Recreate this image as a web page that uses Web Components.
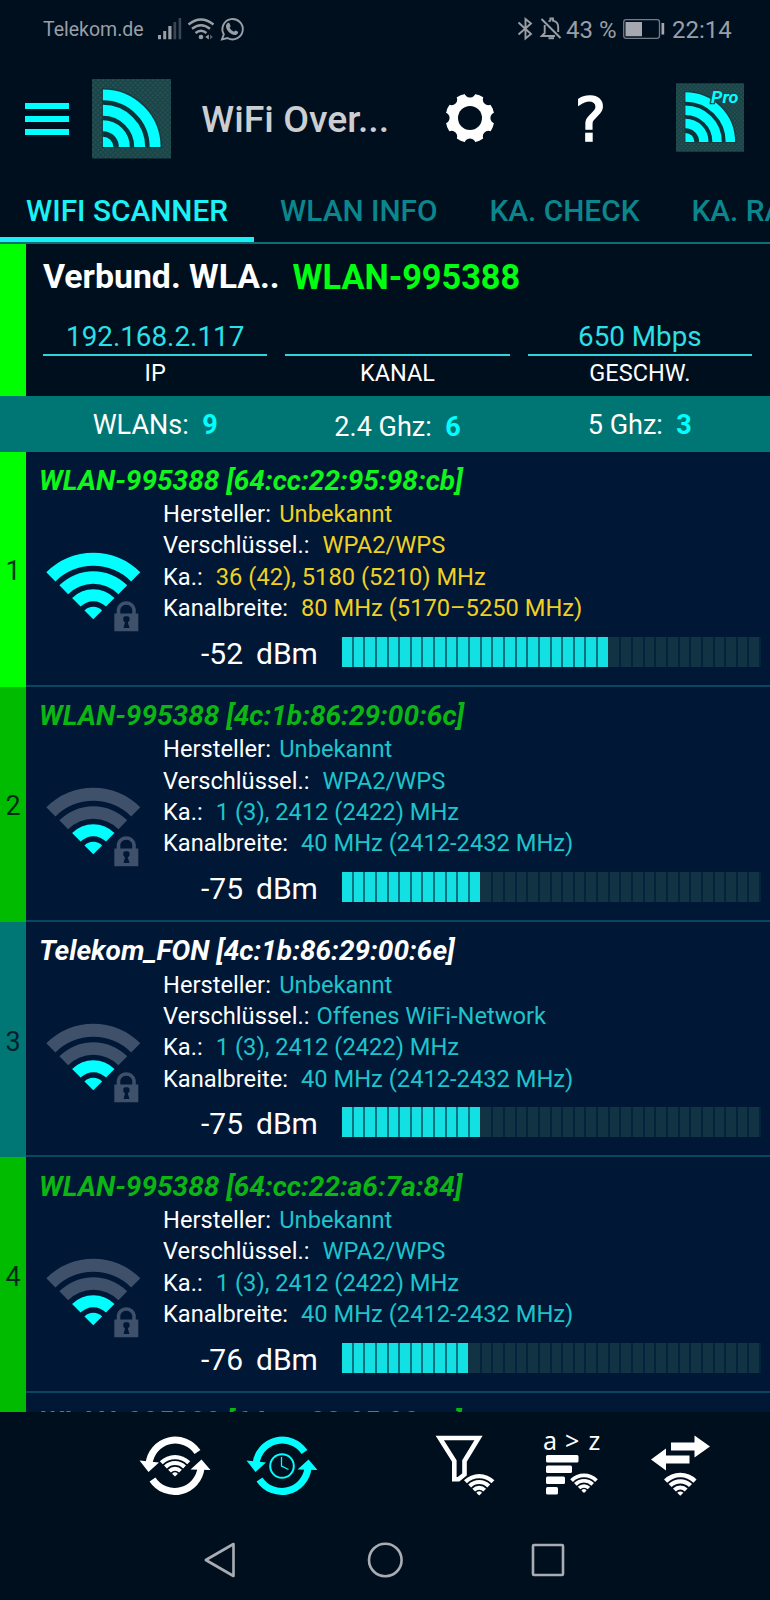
<!DOCTYPE html>
<html lang="de">
<head>
<meta charset="utf-8">
<title>WiFi Overview</title>
<style>
  body {
    margin: 0;
    background: #000f1e;
    color: #fff;
    font-family: Roboto, "Liberation Sans", sans-serif;
    overflow: hidden;
  }
</style>
</head>
<body>
<wifi-app></wifi-app>

<script>
// One 90° band of the fan, tip at 0,0
function band(outer, inner) {
  const o = (outer * Math.SQRT1_2).toFixed(2);
  const i = (inner * Math.SQRT1_2).toFixed(2);
  if (!inner) return `M0 0L-${o} -${o}A${outer} ${outer} 0 0 1 ${o} -${o}Z`;
  return `M-${o} -${o}A${outer} ${outer} 0 0 1 ${o} -${o}L${i} -${i}A${inner} ${inner} 0 0 0 -${i} -${i}Z`;
}

const BANDS = [[12.5, 0], [30, 18], [48, 35.5], [66.5, 53.5]];

function fan(x, y, radius, color) {
  const paths = BANDS.map(([o, i]) => `<path d="${band(o, i)}"/>`).join("");
  return `<g fill="${color}" transform="translate(${x} ${y}) scale(${radius / 66.5})">${paths}</g>`;
}

function define(name, render) {
  customElements.define(name, class extends HTMLElement {
    constructor() {
      super();
      this.attachShadow({ mode: "open" });
    }
    connectedCallback() {
      this.shadowRoot.innerHTML = render(this);
    }
  });
}

define("status-bar", () => `
  <style>
    :host { display: flex; height: 60px; box-sizing: border-box; color: #9a9fa6; white-space: pre; }
    .carrier { width: 111px; margin-left: 43px; font-size: 19.500px; line-height: 30px; padding-top: 14.5px; }
    .left-icons { width: 94px; height: 60px; }
    .right { margin-left: 268px; display: flex; font-size: 24px; line-height: 30px; }
    .text { padding-top: 15px; }
    .pct { width: 55px; margin-left: 1px; }
    svg { flex: none; display: block; }
  </style>
  <div class="carrier">Telekom.de</div>
  <svg class="left-icons" viewBox="154 0 94 60" fill="#9a9fa6">
    <path d="M158 35h3v4.300h-3zM163.200 31h3v8.300h-3zM168.300 26h3.200v13.300h-3.200z"/>
    <path fill="#3a4654" d="M173.500 22h2.700v17.300h-2.700zM178.600 18h2.600v21.300h-2.600z"/>
    <g fill="none" stroke="#9a9fa6" stroke-width="2.400">
      <path d="M188.500 24.500Q201 14.500 213.500 24.500"/>
      <path d="M192 28.800Q201 21.500 210 28.800"/>
      <path d="M195.500 33Q201 28.500 206.500 33"/>
    </g>
    <circle cx="201" cy="37" r="2.300"/>
    <path d="M208.800 34.500v5l-3.500-2.500z"/>
    <path fill="#4d5864" d="M210 34.500v5l3-2.500z"/>
    <path fill="none" stroke="#9a9fa6" stroke-width="1.900" d="M222 39.300L223.800 34.300A10.200 10.200 0 1 1 227.500 38L222 39.300Z"/>
    <path d="M227.500 23.300c1-.8 1.900-.4 2.200.4l.9 2.200c.1.500-1 1.400-1 1.700c1 2.200 2.700 3.500 4.400 4.100c.5 0 1.200-1.300 1.700-1.200l2.300 1.200c.4.600-.1 2.600-2.300 3.200c-4 .6-9.800-4.400-9.700-8.700c0-1.200.7-2.300 1.500-2.900z"/>
  </svg>
  <div class="right">
    <svg width="49" height="60" viewBox="516 0 49 60" fill="none" stroke="#9a9fa6" stroke-width="1.900">
      <path d="M518.500 22.500L531 34L525.500 38.500V19L531 23.500L518.500 34.500"/>
      <path d="M541.500 19L560.500 38"/>
      <path d="M544.700 25V33L541.800 36H555M548.500 21.500Q549.500 20.800 550.400 20.600V18.500H553V20.600C556.500 21.300 558.200 24 558.200 27V32"/>
      <path d="M548.500 38.200H554" stroke-width="2"/>
    </svg>
    <div class="text pct">43 %</div>
    <svg width="44" height="60" viewBox="621 0 44 60">
      <rect x="623.700" y="19.700" width="35.800" height="18.600" rx="2.500" fill="none" stroke="#747c86" stroke-width="1.300"/>
      <path fill="#a5a9af" d="M625.500 22h16.500v14.200h-16.500zM661.500 23h2.700v11.500h-2.700z"/>
    </svg>
    <div class="text" style="margin-left:7px">22:14</div>
  </div>
`);

define("app-logo", (el) => {
  const pro = el.hasAttribute("pro");
  return `
  <style>
    :host { display: block; flex: none; }
    svg { display: block; width: 100%; height: 100%; }
    text { font: italic bold 20px Roboto, sans-serif; }
  </style>
  <svg viewBox="0 0 80 80">
    <defs>
      <pattern id="mesh" width="5" height="5" patternUnits="userSpaceOnUse">
        <rect width="5" height="5" fill="#1a4447"/>
        <circle cx="1.200" cy="1.200" r="1" fill="#2a5658"/>
        <circle cx="3.700" cy="3.700" r="1" fill="#2a5658"/>
      </pattern>
    </defs>
    <rect width="80" height="80" rx="1" fill="url(#mesh)"/>
    <path d="M11 10A58.500 58.500 0 0 1 69.500 68.500H11Z" fill="#0b3339" stroke="#123b40" stroke-width="2"/>
    <g fill="none" stroke="#00ffff" stroke-width="11">
      <path d="M11 16A52.500 52.500 0 0 1 63.500 68.500M11 31.500A37 37 0 0 1 48 68.500M11 47A21.500 21.500 0 0 1 32.500 68.500"/>
    </g>
    <path fill="#00ffff" d="M11 68.500V58A10.500 10.500 0 0 1 21.500 68.500Z"/>
    ${pro ? '<text x="41" y="23" fill="#00ffff" stroke="#1a4447" stroke-width="3" paint-order="stroke" textLength="32" lengthAdjust="spacingAndGlyphs">Pro</text>' : ""}
  </svg>`;
});

define("app-bar", () => {
  const notches = [0, 45, 90, 135, 180, 225, 270, 315]
    .map((a) => `<circle cx="25" cy="-1" r="5.600" transform="rotate(${a} 25 25)"/>`).join("");
  return `
  <style>
    :host { display: flex; height: 118px; align-items: flex-start; }
    .menu { display: grid; gap: 6.500px; width: 43.500px; margin: 42.500px 0 0 25.300px; }
    .menu i { height: 6.500px; background: #00ffff; }
    .logo { width: 79.500px; height: 79.500px; margin: 19px 0 0 23px; }
    h1 { margin: 33px 0 0 30px; width: 243.700px; font-size: 37.400px; font-weight: 500; line-height: 52px; color: #ccced1; white-space: nowrap; }
    .gear { margin: 32.500px 0 0 0; flex: none; }
    .help { width: 60px; margin: 25px 0 0 65.500px; font: 60px/70px "DejaVu Sans", sans-serif; text-align: center; -webkit-text-stroke: 1.500px #fff; }
    .pro { width: 68.500px; height: 69px; margin: 23px 0 0 55.500px; }
  </style>
  <div class="menu"><i></i><i></i><i></i></div>
  <app-logo class="logo"></app-logo>
  <h1>WiFi Over...</h1>
  <svg class="gear" width="50" height="50" viewBox="0 0 50 50">
    <circle cx="25" cy="25" r="24.500" fill="#fff"/>
    <g fill="#000f1e">${notches}<circle cx="25" cy="25" r="12"/></g>
  </svg>
  <div class="help">?</div>
  <app-logo class="pro" pro></app-logo>`;
});

define("tab-strip", () => `
  <style>
    :host { display: flex; height: 66px; box-sizing: border-box; border-bottom: 2px solid #0c6f77; overflow: hidden; }
    ::slotted(span) {
      flex: none; box-sizing: border-box; height: 64px; padding: 16px 26px 0; font-size: 29.800px; font-weight: 500;
      line-height: 34px; color: #0c868d; white-space: nowrap;
    }
    ::slotted(.active) { color: #1af2f6; border-bottom: 5px solid #17f0f4; }
  </style>
  <slot></slot>
`);

define("info-field", (el) => `
  <style>
    :host { display: block; text-align: center; }
    .value { height: 37px; box-sizing: border-box; font-size: 27.800px; line-height: 36px; color: #2be0e6; border-bottom: 2.500px solid #2fd3da; }
    .label { font-size: 23.500px; line-height: 30px; padding-top: 2px; }
  </style>
  <div class="value"><slot></slot></div>
  <div class="label">${el.getAttribute("label")}</div>
`);

define("connection-panel", () => `
  <style>
    :host { display: block; height: 151.500px; box-sizing: border-box; border-left: 26px solid #00ff00; padding: 9px 18px 0 17px; }
    .head { display: flex; height: 66px; font-size: 33.800px; line-height: 48px; font-weight: 700; white-space: nowrap; }
    .head span { width: 249.500px; }
    .head b { color: #0f1; font-size: 34.300px; font-weight: 700; }
    .fields { display: grid; grid-template-columns: repeat(3, 1fr); gap: 18px; }
  </style>
  <div class="head"><span>Verbund. WLA..</span><b>WLAN-995388</b></div>
  <div class="fields"><slot></slot></div>
`);

define("count-bar", () => `
  <style>
    :host {
      display: grid; grid-template-columns: repeat(3, 1fr); gap: 18px; height: 56px; box-sizing: border-box;
      padding: 0 18px 0 43px; background: #007674; font-size: 27px; line-height: 34px; text-align: center;
    }
    div { padding-top: 12px; white-space: pre; }
    .mid { padding-top: 14.500px; }
    b { color: #0ff; font-weight: 700; }
  </style>
  <div>WLANs: <b> 9</b></div><div class="mid">2.4 Ghz: <b> 6</b></div><div>5 Ghz: <b> 3</b></div>
`);

define("signal-meter", (el) => {
  const lit = Number(el.getAttribute("lit"));
  let cells = "";
  for (let n = 0; n < 36; n++) {
    const state = n < lit - 1 ? "on" : n === lit - 1 ? "on last" : "";
    cells += `<i class="${state}"></i>`;
  }
  return `
  <style>
    :host { display: flex; flex: none; width: 419px; height: 30px; }
    i { flex: 1; box-sizing: border-box; background: #123344; border-right: 2.400px solid #04233c; }
    i.on { background: #12e0e2; border-color: #04727f; }
    i.last { border-color: #123344; }
  </style>${cells}`;
});

define("wlan-row", (el) => {
  const at = (name) => el.getAttribute(name);
  const strength = Number(at("strength"));
  const fans = BANDS.map(([o, i], n) =>
    `<path d="${band(o, i)}" fill="${n < strength ? "#00ffff" : "#3e506a"}"/>`).join("");
  return `
  <style>
    :host { display: flex; height: 235.300px; flex: none; --mark: #00bb00; --value: #1fc3cb; --title: #0cb414; }
    :host([tone="own"]) { --mark: #00ff00; --value: #efd023; --title: #10f51c; }
    :host([tone="open"]) { --mark: #007775; --title: #fff; }
    .no { width: 26px; flex: none; box-sizing: border-box; background: var(--mark); color: rgba(0, 15, 30, .85); font-size: 27px; line-height: 30px; padding-top: 104.500px; text-align: center; }
    .body { flex: 1; box-sizing: border-box; border-bottom: 2px solid #0b4660; background: #001735; padding: 13.200px 0 0 13px; }
    h2 { margin: 0; font-size: 28px; line-height: 32px; font-weight: 700; font-style: italic; color: var(--title); white-space: nowrap; }
    .info { display: flex; margin-top: 1.500px; height: 125.200px; }
    .info svg { flex: none; margin: 50px 17px 0 7px; display: block; }
    dl { display: grid; grid-auto-rows: 31.300px; margin: 1px 0 0; font-size: 23.700px; line-height: 31.300px; }
    dl div { white-space: pre; }
    dt, dd { display: inline; margin: 0; }
    dd { color: var(--value); margin-left: 1.300px; }
    .vendor { margin-left: 2.500px; }
    .level { display: flex; margin-top: 13.500px; font-size: 30px; line-height: 34px; height: 30px; }
    .num { width: 44px; margin-left: 160px; text-align: right; }
    .unit { width: 86px; margin-left: 13px; }
  </style>
  <div class="no">${at("no")}</div>
  <div class="body">
    <h2>${at("name")}</h2>
    <div class="info">
      <svg width="100" height="84" viewBox="46 548 100 84" style="overflow:visible">
        <g transform="translate(93.300 619.300)">${fans}</g>
        <path fill="none" stroke="#3e506a" stroke-width="3.600" d="M118.500 614V609.500A7.800 7.300 0 0 1 134 609.500V614"/>
        <path fill="#3e506a" fill-rule="evenodd" d="M114.300 613.500H138.300V631.200H114.300ZM123.300 617.500V620.500L125 622.500L123.500 628H129.500L127.800 622.500L129.500 620.500V617.500L128 616.300H124.800Z"/>
      </svg>
      <dl>
        <div><dt>Hersteller: </dt><dd class="vendor">${at("vendor") || "Unbekannt"}</dd></div>
        <div><dt>Verschlüssel.: </dt><dd>${at("security") || " WPA2/WPS"}</dd></div>
        <div><dt>Ka.:  </dt><dd>${at("channel")}</dd></div>
        <div><dt>Kanalbreite:  </dt><dd>${at("width")}</dd></div>
      </dl>
    </div>
    <div class="level">
      <span class="num">${at("dbm")}</span><span class="unit">dBm</span>
      <signal-meter lit="${at("lit")}"></signal-meter>
    </div>
  </div>`;
});

define("wlan-list", () => `
  <style>
    :host { display: flex; flex-direction: column; height: 960.500px; overflow: hidden; }
  </style>
  <slot></slot>
`);

const CYCLE = `
  <path fill="none" stroke="currentColor" stroke-width="7" d="M10 34A26.500 26.500 0 0 1 58.500 22M62 38A26.500 26.500 0 0 1 13.500 49.500"/>
  <path fill="currentColor" d="M.5 30.500L20 32.500L9.500 42ZM71.500 40L51.500 39.500L62.500 29.500Z"/>`;

define("tool-bar", () => `
  <style>
    :host { display: flex; gap: 35px; height: 108px; box-sizing: border-box; padding: 17.500px 0 0 139px; background: #000f1e; }
    svg { display: block; width: 72px; height: 72px; flex: none; }
    .filter { margin-left: 77.500px; }
    text { font: 25px "Noto Sans", "Open Sans", sans-serif; }
  </style>
  <svg viewBox="0 0 72 72" color="#fff">
    ${CYCLE}
    ${fan(36, 46.500, 21.500, "#fff")}
  </svg>
  <svg viewBox="0 0 72 72" color="#00ffff">
    ${CYCLE}
    <g fill="none" stroke="currentColor">
      <circle cx="36" cy="36" r="11.800" stroke-width="2"/>
      <path d="M35.500 27V36L42.500 39.500" stroke-width="1.300"/>
    </g>
  </svg>
  <svg class="filter" viewBox="0 0 72 72">
    <path fill="none" stroke="#fff" stroke-width="4.600" d="M8.800 8H47.500L33.500 31V44.500L27.500 49.200H23.300V31Z"/>
    ${fan(48.200, 65.500, 21.500, "#fff")}
  </svg>
  <svg viewBox="0 0 72 72" fill="#fff">
    <text x="5 20 27 42 50.500" y="20">a &gt; z</text>
    <rect x="8" y="25" width="32.500" height="7.500" rx="1.500"/>
    <rect x="8" y="35.500" width="26" height="7.500" rx="1.500"/>
    <rect x="8" y="46.500" width="19" height="7.500" rx="1.500"/>
    <rect x="8" y="57" width="12" height="7.500" rx="1.500"/>
    ${fan(46, 63, 19.500, "#fff")}
  </svg>
  <svg viewBox="0 0 72 72" fill="#fff">
    <path d="M26 12.500H49.500V5.500L65 16.500L49.500 27.500V20.500H26Z"/>
    <path d="M44.500 33.500H21V40.500L6 29.500L21 18.500V25.500H44.500Z"/>
    ${fan(35.300, 65.800, 23, "#fff")}
  </svg>
`);

define("nav-bar", () => `
  <style>
    :host { display: flex; gap: 123.500px; height: 80px; padding: 19.500px 0 0 200px; box-sizing: border-box; background: #000f1e; }
    svg { display: block; width: 40px; height: 40px; flex: none; fill: none; stroke: #a9adb3; stroke-width: 2.600; stroke-linejoin: round; }
  </style>
  <svg viewBox="0 0 40 40"><path d="M5.800 20L33.500 4V36Z"/></svg>
  <svg viewBox="0 0 40 40"><circle cx="21.300" cy="20" r="16.300"/></svg>
  <svg viewBox="0 0 40 40"><rect x="6" y="5" width="30" height="30" rx="1"/></svg>
`);

define("wifi-app", () => `
  <style>
    :host { display: block; width: 770px; height: 1600px; overflow: hidden; background: #000f1e; }
  </style>
  <status-bar></status-bar>
  <app-bar></app-bar>
  <tab-strip>
    <span class="active">WIFI SCANNER</span><span>WLAN INFO</span><span>KA. CHECK</span><span>KA. RATING</span>
  </tab-strip>
  <connection-panel>
    <info-field label="IP">192.168.2.117</info-field>
    <info-field label="KANAL"></info-field>
    <info-field label="GESCHW.">650 Mbps</info-field>
  </connection-panel>
  <count-bar></count-bar>
  <wlan-list>
    <wlan-row no="1" tone="own" name="WLAN-995388 [64:cc:22:95:98:cb]" channel="36 (42), 5180 (5210) MHz" width="80 MHz (5170–5250 MHz)" dbm="-52" lit="23" strength="4"></wlan-row>
    <wlan-row no="2" name="WLAN-995388 [4c:1b:86:29:00:6c]" channel="1 (3), 2412 (2422) MHz" width="40 MHz (2412-2432 MHz)" dbm="-75" lit="12" strength="2"></wlan-row>
    <wlan-row no="3" tone="open" name="Telekom_FON [4c:1b:86:29:00:6e]" security="Offenes WiFi-Network" channel="1 (3), 2412 (2422) MHz" width="40 MHz (2412-2432 MHz)" dbm="-75" lit="12" strength="2"></wlan-row>
    <wlan-row no="4" name="WLAN-995388 [64:cc:22:a6:7a:84]" channel="1 (3), 2412 (2422) MHz" width="40 MHz (2412-2432 MHz)" dbm="-76" lit="11" strength="2"></wlan-row>
    <wlan-row no="5" name="WLAN-995388 [64:cc:22:95:98:cc]" channel="36 (42), 5180 (5210) MHz" width="80 MHz (5170–5250 MHz)" dbm="-78" lit="10" strength="2"></wlan-row>
  </wlan-list>
  <tool-bar></tool-bar>
  <nav-bar></nav-bar>
`);
</script>
</body>
</html>
